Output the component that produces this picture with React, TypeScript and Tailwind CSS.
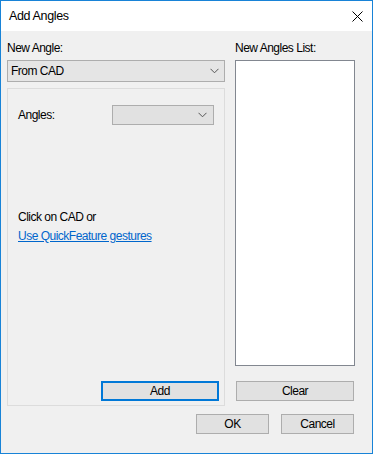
import React from 'react';

const Chevron: React.FC = () => (
  <svg width="9" height="6" viewBox="0 0 9 6" className="shrink-0">
    <path d="M0.5 0.8 L4.5 4.8 L8.5 0.8" fill="none" stroke="#555" strokeWidth={1} />
  </svg>
);

const WinButton: React.FC<{ label: string; width: string; focused?: boolean }> = ({ label, width, focused }) => (
  <button
    className={`${width} h-[20px] flex items-center justify-center bg-[#e1e1e1] text-black ${
      focused ? 'border-2 border-[#0078d7]' : 'border border-[#adadad]'
    }`}
  >
    {label}
  </button>
);

const App: React.FC = () => {
  return (
    <div
      className="w-[373px] h-[454px] border border-[#1883d7] bg-[#f0f0f0] flex flex-col text-[12px] tracking-[-0.5px] text-black overflow-hidden"
      style={{ fontFamily: '"Segoe UI", "Liberation Sans", Arial, sans-serif' }}
    >
      {/* title bar */}
      <div className="h-[30px] bg-white flex items-center justify-between pl-[8px] pr-[9px] shrink-0">
        <span className="text-[12.5px] leading-[16px] tracking-[-0.35px]">Add Angles</span>
        <svg width="11" height="11" viewBox="0 0 11 11">
          <path d="M0.5 0.5 L10.5 10.5 M10.5 0.5 L0.5 10.5" stroke="#000" strokeWidth={1} />
        </svg>
      </div>

      {/* body */}
      <div className="flex-1 flex flex-col pl-[6px] pr-[17px] pt-[9px] pb-[19px]">
        <div className="flex gap-[10px] flex-1">
          {/* left column */}
          <div className="w-[218px] flex flex-col">
            <div className="h-[16px] leading-[16px] mb-[4px]">New Angle:</div>
            <div className="h-[22px] bg-[#e5e5e5] border border-[#adadad] flex items-center justify-between pl-[3px] pr-[5px]">
              <span>From CAD</span>
              <Chevron />
            </div>
            <div className="mt-[6px] flex-1 border border-[#dcdcdc] flex flex-col">
              <div className="flex items-center justify-between pl-[10px] pr-[10px] pt-[16px]">
                <span>Angles:</span>
                <div className="w-[102px] h-[20px] bg-[#e1e1e1] border border-[#adadad] flex items-center justify-end pr-[6px]">
                  <Chevron />
                </div>
              </div>
              <div className="pl-[10px] mt-[83px] leading-[19px]">
                <div>Click on CAD or</div>
                <a href="#" className="text-[#0066cc] underline">
                  Use QuickFeature gestures
                </a>
              </div>
              <div className="flex-1" />
              <div className="flex justify-end pr-[5px] pb-[4px]">
                <WinButton label="Add" width="w-[118px]" focused />
              </div>
            </div>
          </div>

          {/* right column */}
          <div className="w-[120px] flex flex-col">
            <div className="h-[16px] leading-[16px] mb-[4px]">New Angles List:</div>
            <div className="h-[306px] bg-white border border-[#828790]" />
            <div className="mt-[15px] pl-[1px]">
              <WinButton label="Clear" width="w-[118px]" />
            </div>
          </div>
        </div>

        <div className="flex justify-end gap-[12px] pr-[1px] mt-[8px]">
          <WinButton label="OK" width="w-[73px]" />
          <WinButton label="Cancel" width="w-[73px]" />
        </div>
      </div>
    </div>
  );
};

export default App;
